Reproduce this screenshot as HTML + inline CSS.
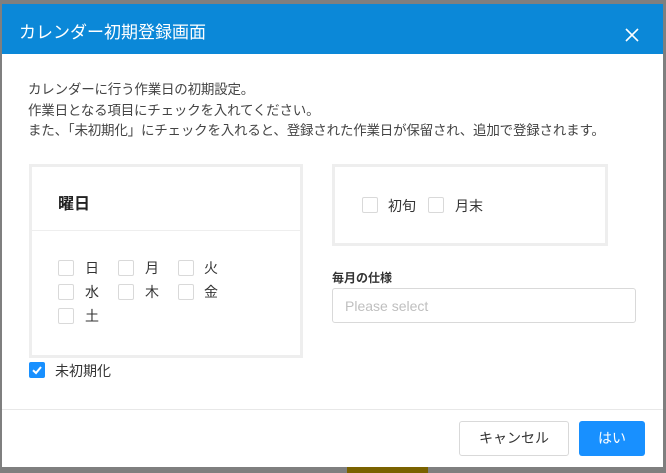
<!DOCTYPE html>
<html><head><meta charset="utf-8"><style>
*{box-sizing:border-box;margin:0;padding:0}
body{width:666px;height:473px;background:#7f7f7f;position:relative;overflow:hidden;font-family:"Liberation Sans","Noto Sans CJK JP",sans-serif;color:#333}
.abs{position:absolute}
.modal{left:2px;top:4px;width:661px;height:463px;background:#fff}
.hdr{left:2px;top:4px;width:661px;height:50px;background:#0b88d8;color:#fff;font-size:17px;line-height:58px;padding-left:17px}
.cb{position:absolute;width:16px;height:16px;border:1px solid #d9d9d9;border-radius:2px;background:#fff}
.lb{position:absolute;font-size:14px;line-height:16px;color:#333}
.txt{font-size:13.5px;color:#444;line-height:20.5px;letter-spacing:-0.2px}
</style></head><body>
<div class="abs" style="left:347px;top:467px;width:81px;height:6px;background:#7a6200"></div>
<div class="abs modal"></div>
<div class="abs hdr">カレンダー初期登録画面</div>
<svg class="abs" style="left:625px;top:28px" width="14" height="14"><path d="M1 1L13 13M13 1L1 13" stroke="#fff" stroke-width="1.6"/></svg>
<div class="abs txt" style="left:28px;top:80px">カレンダーに行う作業日の初期設定。<br>作業日となる項目にチェックを入れてください。<br>また、「未初期化」にチェックを入れると、登録された作業日が保留され、追加で登録されます。</div>

<div class="abs" style="left:29px;top:164px;width:274px;height:194px;border:3px solid #eee"></div>
<div class="abs" style="left:32px;top:230px;width:268px;height:1px;background:#eee"></div>
<div class="abs" style="left:58px;top:190px;font-size:16px;font-weight:bold;color:#222">曜日</div>
<div class="cb" style="left:58px;top:260px"></div><div class="lb" style="left:85px;top:260px">日</div>
<div class="cb" style="left:118px;top:260px"></div><div class="lb" style="left:145px;top:260px">月</div>
<div class="cb" style="left:178px;top:260px"></div><div class="lb" style="left:204px;top:260px">火</div>
<div class="cb" style="left:58px;top:284px"></div><div class="lb" style="left:85px;top:284px">水</div>
<div class="cb" style="left:118px;top:284px"></div><div class="lb" style="left:145px;top:284px">木</div>
<div class="cb" style="left:178px;top:284px"></div><div class="lb" style="left:204px;top:284px">金</div>
<div class="cb" style="left:58px;top:308px"></div><div class="lb" style="left:85px;top:308px">土</div>

<div class="abs" style="left:332px;top:164px;width:276px;height:82px;border:3px solid #eee"></div>
<div class="cb" style="left:362px;top:197px"></div><div class="lb" style="left:388px;top:198px">初旬</div>
<div class="cb" style="left:428px;top:197px"></div><div class="lb" style="left:455px;top:198px">月末</div>

<div class="abs" style="left:332px;top:269px;font-size:12px;font-weight:bold;color:#333">毎月の仕様</div>
<div class="abs" style="left:332px;top:288px;width:304px;height:35px;border:1px solid #d9d9d9;border-radius:3px;font-size:14px;color:#bfbfbf;line-height:35px;padding-left:12px">Please select</div>

<div class="abs" style="left:29px;top:362px;width:16px;height:16px;background:#1890ff;border-radius:2px"></div>
<svg class="abs" style="left:29px;top:362px" width="16" height="16"><path d="M4 8.3L7 11L12 5" stroke="#fff" stroke-width="2" fill="none"/></svg>
<div class="lb" style="left:55px;top:363px">未初期化</div>

<div class="abs" style="left:2px;top:409px;width:661px;height:1px;background:#e8e8e8"></div>
<div class="abs" style="left:459px;top:421px;width:110px;height:35px;border:1px solid #d9d9d9;border-radius:3px;font-size:14px;line-height:33px;text-align:center;color:#333">キャンセル</div>
<div class="abs" style="left:579px;top:421px;width:66px;height:35px;background:#1890ff;border-radius:3px;font-size:14px;line-height:35px;text-align:center;color:#fff">はい</div>
</body></html>
